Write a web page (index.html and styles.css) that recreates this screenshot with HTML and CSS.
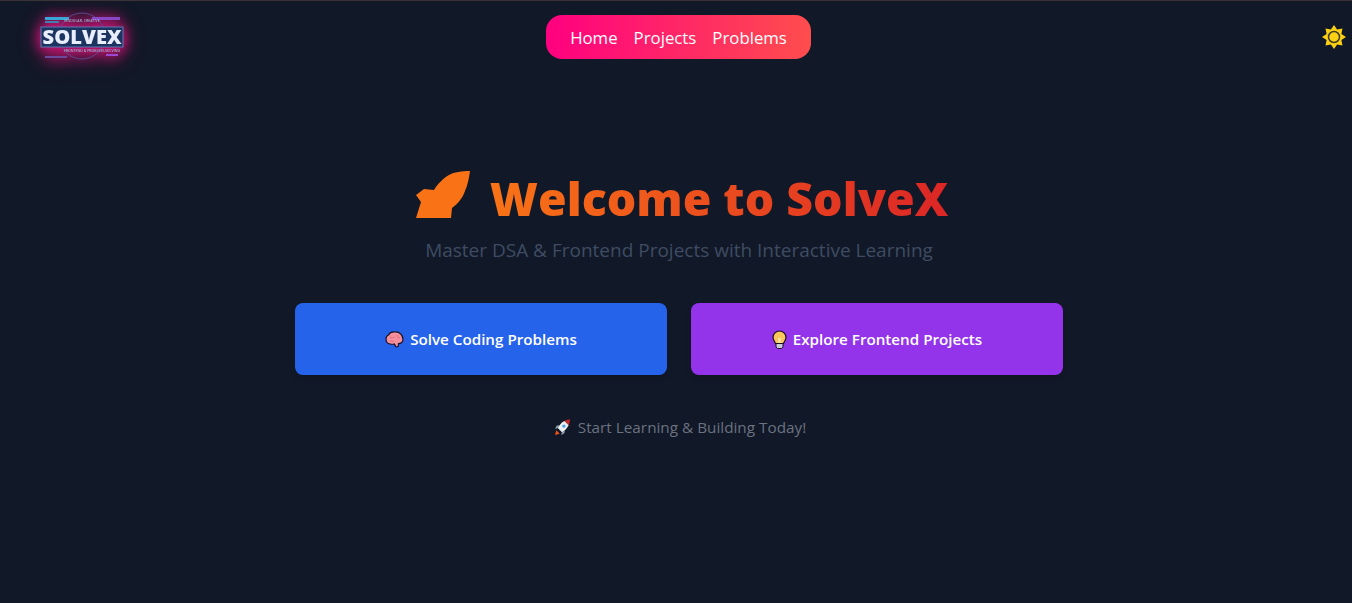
FILE: index.html
```html
<!DOCTYPE html>
<html lang="en">
<head>
    <meta charset="UTF-8">
    <meta name="viewport" content="width=device-width, initial-scale=1.0">
    <title>SolveX</title>
    <link rel="stylesheet" href="styles.css">
</head>
<body>
    <header class="navbar">
        <a class="logo" href="#">
            <svg width="100" height="70" viewBox="0 0 100 70">
                <defs>
                    <filter id="logoBlur"><feGaussianBlur stdDeviation="0.4"/></filter>
                </defs>
                <g filter="url(#logoBlur)">
                    <circle cx="52" cy="35" r="23" fill="none" stroke="#5b4a8c" stroke-width="1"/>
                    <rect x="15" y="16" width="24" height="3" fill="#38a9d6"/>
                    <rect x="15" y="20" width="14" height="2" fill="#3f7fb0"/>
                    <rect x="62" y="16" width="28" height="3" fill="#8a46c4"/>
                    <rect x="11" y="26" width="82" height="20" fill="#1d3560" stroke="#5f78b4" stroke-width="1"/>
                    <rect x="15" y="55" width="22" height="2" fill="#6a4a9c"/>
                    <rect x="76" y="53" width="12" height="2" fill="#9a4ad0"/>
                    <text x="52" y="20.500" class="logo-small" text-anchor="middle">MODULAR. CREATIVE</text>
                    <text x="52" y="42.500" class="logo-word" text-anchor="middle" textLength="79" lengthAdjust="spacingAndGlyphs">SOLVEX</text>
                    <text x="62" y="50.500" class="logo-small" text-anchor="middle">FRONTEND &amp; PROBLEM-SOLVING</text>
                </g>
            </svg>
        </a>
        <nav class="nav-pill">
            <a href="#">Home</a>
            <a href="#">Projects</a>
            <a href="#">Problems</a>
        </nav>
        <button class="theme-toggle" aria-label="Toggle theme">
            <svg width="24" height="24" viewBox="0 0 24 24">
                <path fill="#fbcf14" d="M12 0L15.060 4.610 20.490 3.510 19.390 8.940 24 12 19.390 15.060 20.490 20.490 15.060 19.390 12 24 8.940 19.390 3.510 20.490 4.610 15.060 0 12 4.610 8.940 3.510 3.510 8.940 4.610z"/>
                <circle cx="12" cy="12" r="5.500" fill="#fbcf14" stroke="#3d3a24" stroke-width="1.500"/>
            </svg>
        </button>
    </header>

    <main class="hero">
        <h1 class="hero-title">
            <svg class="rocket" width="54" height="48" viewBox="0 0 54 48">
                <path fill="#f97316" d="M54 0C46 0 38 1 33 4 26 8 21 14 18 19L8 18 0 24 5 31 0 47H35L36 37C42 33 47 26 49 20 52 13 53 7 54 0z"/>
            </svg>
            <span class="title-text">Welcome to SolveX</span>
        </h1>
        <p class="subtitle">Master DSA &amp; Frontend Projects with Interactive Learning</p>
        <div class="actions">
            <a class="action action-blue" href="#">
                <svg class="emoji" width="19" height="17" viewBox="0 0 19 17">
                    <path fill="#f4909e" stroke="#1a1020" stroke-width="1.200" d="M1 8c0-2 1-3.500 2.500-4C4.500 2 7 .8 9.500 1c2-.3 4.500.2 6 1.800C17 4 18 6 18 8.500c0 2.500-2 4.200-4.500 4.200l-.2 1.800c0 1.300-1.800 1.800-2.800.8L9.500 13C6 13.500 3 13 2 11.500 1.300 10.500 1 9.500 1 8z"/>
                    <path fill="none" stroke="#e0697a" stroke-width="1" d="M5 6c1.500 1 3 1 4.500 0M12 4c0 2 1 3 3 3M5 10c2-.5 3 0 4 1"/>
                </svg>
                Solve Coding Problems
            </a>
            <a class="action action-purple" href="#">
                <svg class="emoji" width="15" height="19" viewBox="0 0 15 19">
                    <path fill="#fbc65a" stroke="#1a1020" stroke-width="1.200" d="M7.500 1A6.500 6.500 0 0 1 14 7.500c0 2.500-2 4-2.500 6h-8C3 11.500 1 10 1 7.500A6.500 6.500 0 0 1 7.500 1z"/>
                    <path fill="#f7e3a8" d="M6 8h3l-.5 5.500h-2z"/>
                    <path fill="#c9ccd6" stroke="#1a1020" stroke-width="1" d="M4 13.500h7V17l-1.500 1.500h-4L4 17z"/>
                </svg>
                Explore Frontend Projects
            </a>
        </div>
        <p class="tagline">
            <svg class="emoji" width="17" height="17" viewBox="0 0 18 18">
                <path fill="#f4511e" d="M1 17l1.500-5 3.500 3.500z"/>
                <path fill="#c62828" d="M11 2c2-1 4-1.500 6-1.500 0 2-.5 4-1.500 6z"/>
                <path fill="#eceff1" d="M11 2l4.500 4.500c-1.500 3-4 6-7 7.500L4 9.500C5.500 6.500 8 3.500 11 2z"/>
                <circle cx="10.500" cy="7.500" r="1.800" fill="#4aa3df"/>
                <path fill="#90a4ae" d="M4 9.500l-3 1 2-3.500 3-.5zM8.500 14l-1 3 3.500-2 .5-3z"/>
            </svg>
            Start Learning &amp; Building Today!
        </p>
    </main>
</body>
</html>
```

FILE: styles.css
```css
* {
    box-sizing: border-box;
}
html, body {
    height: 100%;
}
body {
    margin: 0;
    min-height: 100vh;
    background: #111827;
    border-top: 1px solid #3b3338;
    font-family: 'Open Sans', 'Noto Sans', Arial, sans-serif;
    color: #fff;
    overflow: hidden;
}
a {
    color: inherit;
    text-decoration: none;
}
.navbar {
    display: grid;
    grid-template-columns: 1fr auto 1fr;
    align-items: start;
    padding: 0 6px 0 30px;
    height: 74px;
}
.logo {
    display: block;
    width: 100px;
    height: 70px;
    filter: drop-shadow(0 1px 6px #d0147a) drop-shadow(0 2px 8px #a8125e);
}
.logo svg {
    display: block;
}
.logo-word {
    font-family: 'Open Sans', Arial, sans-serif;
    font-size: 20px;
    font-weight: 800;
    fill: #e8eefc;
}
.logo-small {
    font-family: 'Open Sans', Arial, sans-serif;
    font-size: 3.500px;
    font-weight: 600;
    fill: #9fb4d8;
}
.nav-pill {
    display: flex;
    gap: 16px;
    margin-top: 14px;
    margin-left: -19px;
    padding: 0 24px;
    height: 44px;
    align-items: center;
    border-radius: 16px;
    background: linear-gradient(90deg, #ff0080, #ff4d4d);
    font-size: 16.800px;
}
.theme-toggle {
    justify-self: end;
    margin-top: 24px;
    padding: 0;
    border: none;
    background: none;
    line-height: 0;
    cursor: pointer;
}
.hero {
    display: flex;
    flex-direction: column;
    align-items: center;
    padding-top: 96px;
    padding-left: 6px;
}
.hero-title {
    display: flex;
    align-items: center;
    gap: 20px;
    margin: 0 0 0 6px;
    font-size: 46.400px;
    font-weight: 800;
    line-height: 48px;
}
.rocket {
    flex: none;
}
.title-text {
    position: relative;
    top: 3px;
    background: linear-gradient(90deg, #f97316, #dc2626);
    -webkit-background-clip: text;
    background-clip: text;
    color: transparent;
}
.subtitle {
    margin: 17px 0 0;
    font-size: 19px;
    line-height: 28px;
    color: #3e4c63;
}
.actions {
    display: flex;
    gap: 24px;
    margin-top: 39px;
}
.action {
    display: flex;
    align-items: center;
    justify-content: center;
    gap: 6px;
    width: 372px;
    height: 72px;
    border-radius: 8px;
    font-size: 15.200px;
    font-weight: 600;
    box-shadow: 0 4px 6px #0000001a;
}
.action-blue {
    background: #2563eb;
}
.action-purple {
    background: #9333ea;
}
.emoji {
    flex: none;
}
.tagline {
    display: flex;
    align-items: center;
    gap: 7px;
    margin: 40px 0 0;
    padding-left: 2px;
    font-size: 15.300px;
    line-height: 24px;
    color: #6b7280;
}
```
